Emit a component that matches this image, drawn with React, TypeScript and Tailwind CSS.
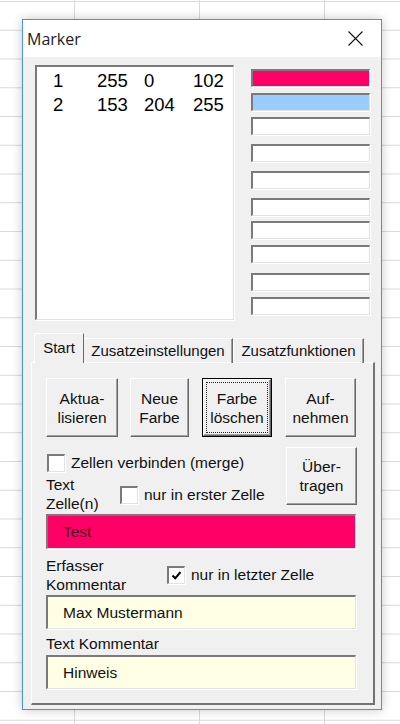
const sunken =
  "border-t-2 border-l-2 border-t-[#7a7a7a] border-l-[#7a7a7a] border-b border-r border-b-[#e3e3e3] border-r-[#e3e3e3] shadow-[1px_1px_0_#ffffff]";
const raised =
  "border border-t-white border-l-white border-r-[#696969] border-b-[#696969] shadow-[inset_-1px_-1px_0_#a0a0a0] bg-[#f0f0f0]";

const swatches = [
  { color: "bg-[#ff0066]", mt: "mt-[4px]" },
  { color: "bg-[#99ccff]", mt: "mt-[6px]" },
  { color: "bg-white", mt: "mt-[6px]" },
  { color: "bg-white", mt: "mt-[9px]" },
  { color: "bg-white", mt: "mt-[9px]" },
  { color: "bg-white", mt: "mt-[9px]" },
  { color: "bg-white", mt: "mt-[5px]" },
  { color: "bg-white", mt: "mt-[6px]" },
  { color: "bg-white", mt: "mt-[10px]" },
  { color: "bg-white", mt: "mt-[6px]" },
];

const rows = [
  ["1", "255", "0", "102"],
  ["2", "153", "204", "255"],
];

function CheckBox({ checked }: { checked?: boolean }) {
  return (
    <div className={`w-[18px] h-[18px] bg-white flex items-center justify-center shrink-0 ${sunken}`}>
      {checked && (
        <svg width="11" height="11" viewBox="0 0 11 11">
          <path d="M1.5 5.5 L4.2 8.3 L9.5 2" fill="none" stroke="#000" strokeWidth="2" />
        </svg>
      )}
    </div>
  );
}

function Btn({ lines, w, h, focus }: { lines: string[]; w: string; h: string; focus?: boolean }) {
  if (focus) {
    return (
      <div className={`${w} ${h} border border-black`}>
        <div className={`w-full h-full p-[2px] ${raised}`}>
          <div className="w-full h-full border border-dotted border-[#222] flex flex-col items-center justify-center leading-[19px]">
            {lines.map((l) => (
              <span key={l}>{l}</span>
            ))}
          </div>
        </div>
      </div>
    );
  }
  return (
    <div className={`${w} ${h} ${raised} flex flex-col items-center justify-center leading-[19px]`}>
      {lines.map((l) => (
        <span key={l}>{l}</span>
      ))}
    </div>
  );
}

function TextBox({ value, bg, fg }: { value: string; bg: string; fg: string }) {
  return (
    <div className={`w-[310px] flex items-center pl-[15px] ${sunken} ${bg} ${fg}`}>{value}</div>
  );
}

export default function App() {
  return (
    <div className="relative w-[400px] h-[724px] overflow-hidden bg-white bg-[linear-gradient(to_right,#dadada_1px,transparent_1px),linear-gradient(to_bottom,#dadada_1px,transparent_1px)] bg-[length:125px_28.75px] bg-[position:74px_1px] font-['Liberation_Sans',Arial,sans-serif] text-[15.5px] text-[#111]">
      <div className="absolute left-[22px] top-[19px] w-[360px] h-[691px] border border-[#4b92d8] bg-white flex flex-col shadow-[0_0_10px_rgba(0,0,0,0.22)]">
        {/* title bar */}
        <div className="h-[37px] flex items-center justify-between pl-[4px] pr-[18px] shrink-0">
          <span className="font-['Open_Sans',sans-serif] text-[16px] text-[#222]">Marker</span>
          <svg width="15" height="15" viewBox="0 0 15 15">
            <path d="M0.5 0.5 L14.5 14.5 M14.5 0.5 L0.5 14.5" stroke="#111" strokeWidth="1.1" />
          </svg>
        </div>

        <div className="flex-1 bg-[#f0f0f0] flex flex-col">
          {/* list and swatches */}
          <div className="flex items-start pt-[8px] pl-[12px]">
            <div className={`w-[199px] h-[255px] bg-white pl-[16px] pt-[2px] ${sunken}`}>
              <div className="grid grid-cols-[44px_47px_49px_auto] text-[18.5px] leading-[24px] text-black">
                {rows.map((r) => r.map((c, i) => <span key={r[0] + i}>{c}</span>))}
              </div>
            </div>
            <div className="ml-[17px] w-[119px] flex flex-col">
              {swatches.map((s, i) => (
                <div key={i} className={`h-[18px] ${s.mt} ${s.color} ${sunken}`} />
              ))}
            </div>
          </div>

          {/* tabs */}
          <div className="mt-[13px] ml-[8px] flex flex-col">
            <div className="flex items-end pl-[3px] relative z-10 -mb-px text-[15px]">
              <div className="w-[50px] h-[30px] bg-[#f0f0f0] border-t border-l border-r border-t-white border-l-white border-r-[#696969] flex items-center justify-center rounded-tl-[2px]">
                Start
              </div>
              <div className="w-[149px] h-[25px] border-t border-r border-t-white border-r-[#696969] shadow-[inset_-1px_0_0_#a0a0a0] flex items-center justify-center">
                Zusatzeinstellungen
              </div>
              <div className="w-[131px] h-[25px] border-t border-l border-r border-t-white border-l-white border-r-[#696969] shadow-[inset_-1px_0_0_#a0a0a0] flex items-center justify-center">
                Zusatzfunktionen
              </div>
            </div>

            <div className="w-[344px] h-[343px] border-t border-l border-r-2 border-b-2 border-t-white border-l-white border-r-[#737373] border-b-[#737373] pl-[14px] pt-[15px] pr-[16px] flex flex-col">
              <div className="flex">
                <Btn lines={["Aktua-", "lisieren"]} w="w-[72px]" h="h-[59px]" />
                <div className="ml-[12px]">
                  <Btn lines={["Neue", "Farbe"]} w="w-[59px]" h="h-[59px]" />
                </div>
                <div className="ml-[13px]">
                  <Btn lines={["Farbe", "löschen"]} w="w-[70px]" h="h-[59px]" focus />
                </div>
                <div className="ml-[13px]">
                  <Btn lines={["Auf-", "nehmen"]} w="w-[71px]" h="h-[59px]" />
                </div>
              </div>

              <div className="mt-[10px] flex items-start">
                <div className="flex-1 pt-[7px] flex flex-col">
                  <div className="flex items-center h-[18px] ml-[1px]">
                    <CheckBox />
                    <span className="ml-[6px]">Zellen verbinden (merge)</span>
                  </div>
                  <div className="mt-[3px] flex items-center">
                    <div className="w-[74px] leading-[19px] flex flex-col">
                      <span>Text</span>
                      <span>Zelle(n)</span>
                    </div>
                    <div className="mt-[2px] flex items-center">
                      <CheckBox />
                      <span className="ml-[6px]">nur in erster Zelle</span>
                    </div>
                  </div>
                </div>
                <Btn lines={["Über-", "tragen"]} w="w-[71px]" h="h-[58px]" />
              </div>

              <div className="mt-[1px] h-[35px] flex">
                <TextBox value="Test" bg="bg-[#ff0066]" fg="text-[#4a0020]" />
              </div>

              <div className="mt-[7px] flex items-center">
                <div className="w-[121px] leading-[19px] flex flex-col">
                  <span>Erfasser</span>
                  <span>Kommentar</span>
                </div>
                <CheckBox checked />
                <span className="ml-[6px]">nur in letzter Zelle</span>
              </div>

              <div className="mt-[1px] h-[34px] flex">
                <TextBox value="Max Mustermann" bg="bg-[#ffffe6]" fg="text-[#111]" />
              </div>

              <div className="mt-[5px] leading-[19px]">Text Kommentar</div>

              <div className="mt-[2px] h-[34px] flex">
                <TextBox value="Hinweis" bg="bg-[#ffffe6]" fg="text-[#111]" />
              </div>
            </div>
          </div>
        </div>
      </div>
    </div>
  );
}
